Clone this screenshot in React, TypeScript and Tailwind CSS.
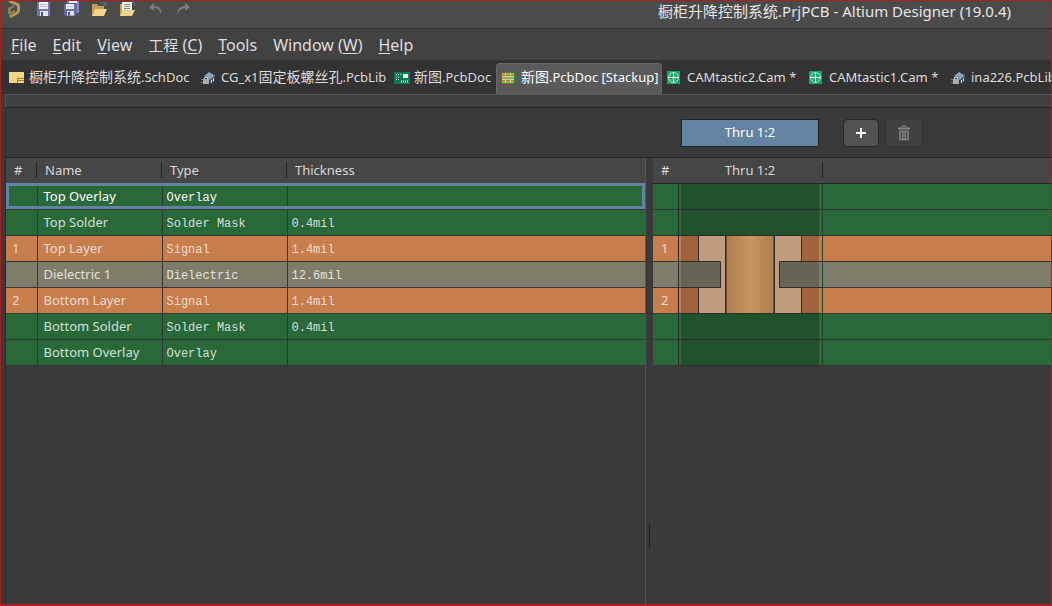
import type { ReactNode } from 'react'
import { clsx } from 'clsx'

type Material = 'mask' | 'copper' | 'core'

interface Layer {
  num?: string
  name: string
  type: string
  thickness?: string
  material: Material
}

const layers: Layer[] = [
  { name: 'Top Overlay', type: 'Overlay', material: 'mask' },
  { name: 'Top Solder', type: 'Solder Mask', thickness: '0.4mil', material: 'mask' },
  { num: '1', name: 'Top Layer', type: 'Signal', thickness: '1.4mil', material: 'copper' },
  { name: 'Dielectric 1', type: 'Dielectric', thickness: '12.6mil', material: 'core' },
  { num: '2', name: 'Bottom Layer', type: 'Signal', thickness: '1.4mil', material: 'copper' },
  { name: 'Bottom Solder', type: 'Solder Mask', thickness: '0.4mil', material: 'mask' },
  { name: 'Bottom Overlay', type: 'Overlay', material: 'mask' },
]

const rowColors: Record<Material, string> = {
  mask: 'bg-[#296839] text-[#d3e0d6]',
  copper: 'bg-[#c77d4c] text-[#f3dccd]',
  core: 'bg-[#7f7c6a] text-[#e3e2dc]',
}

const LogoIcon = () => (
  <svg width="14" height="18" viewBox="0 0 14 18" fill="none">
    <path d="M1 1l3-1 8 3.500 1 2v6L11 14l-7 4-2-2 8-5V6L3 3z" fill="#b3975c" />
    <path d="M1 8l6-3v2.500L4 9v3l4-2.200V12l-5 3-2-1.500z" fill="#94804f" />
  </svg>
)

const SaveIcon = () => (
  <svg width="15" height="15" viewBox="0 0 15 15">
    <path d="M1 0h13v14H2l-1-1z" fill="#7174b8" />
    <path d="M3 0h9v7H3z" fill="#f4f4fa" />
    <path d="M4 2.500h7M4 4.500h7" stroke="#b9bad6" />
    <path d="M4 9h8v5H4z" fill="#e6e6f2" />
    <path d="M5 10h2v4H5z" fill="#4a4d94" />
  </svg>
)

const SaveAllIcon = () => (
  <svg width="17" height="16" viewBox="0 0 17 16">
    <path d="M4 0h12v12H4z" fill="#8487c6" />
    <path d="M6 0h8v2H6z" fill="#f1f1f8" />
    <path d="M1 2.500h12V15H2l-1-1z" fill="#6a6db4" stroke="#3f4180" strokeWidth=".5" />
    <path d="M3 3h8v5H3z" fill="#f1f1f8" />
    <path d="M4 5.500h6" stroke="#b9bad6" />
    <path d="M4 10h7v4.500H4z" fill="#e2e2f0" />
    <path d="M5 11h2v3.500H5z" fill="#4a4d94" />
  </svg>
)

const OpenIcon = () => (
  <svg width="17" height="16" viewBox="0 0 17 16">
    <path d="M1 3h5l1 2h6v10H1z" fill="#c79d52" />
    <path d="M4 8h12l-3 7H1z" fill="#f3d48d" />
    <path d="M9 3c2-2 4-2 5 0m1-2v3h-3" fill="none" stroke="#5d7592" />
  </svg>
)

const OpenProjectIcon = () => (
  <svg width="17" height="16" viewBox="0 0 17 16">
    <path d="M1 3h4v12H1z" fill="#c79d52" />
    <path d="M3 1h10v10H3z" fill="#f5f2e8" />
    <path d="M5 3.500h6M5 5.500h6M5 7.500h6" stroke="#8a8a8a" />
    <path d="M4 9h12l-3 6H1z" fill="#f3d48d" />
    <path d="M13 0.500l3 2-1 2" fill="none" stroke="#5d7592" />
  </svg>
)

const UndoIcon = ({ flip = false }: { flip?: boolean }) => (
  <svg width="15" height="12" viewBox="0 0 15 12" className={clsx(flip && '-scale-x-100')}>
    <path d="M6 0L1 4l5 4V5.200c4 0 6 2 7 6.300 1.500-5-2-8.500-7-8.500z" fill="#7b7b7b" />
  </svg>
)

const SchIcon = () => (
  <svg width="16" height="12" viewBox="0 0 16 12">
    <path d="M0 0h15v11H0z" fill="#f3d583" />
    <path d="M8.500 11V6.500H15M8.500 8.500H15" fill="none" stroke="#a47b2c" />
  </svg>
)

const LibIcon = () => (
  <svg width="15" height="14" viewBox="0 0 15 14">
    <path d="M3 5l5-4 6 3.500L9 9z" fill="#7f9bb3" />
    <path d="M9 9l5-4.500v3L9 12z" fill="#46586a" />
    <path d="M10.500 9v3M12.500 7.500v3" stroke="#dde5ec" />
    <path d="M2 8h6v5H2z" fill="#a4acb4" />
    <path d="M3.500 8V6.500h3V8" fill="none" stroke="#c8d2dc" />
    <path d="M0 8.500h2M0 11.500h2" stroke="#6b7782" />
    <path d="M6 3.500l5 3M8 2.500l4 2.500" stroke="#b1c2d0" strokeDasharray="1 1" />
  </svg>
)

const PcbIcon = () => (
  <svg width="16" height="12" viewBox="0 0 16 12">
    <path d="M0 0h16v12H0z" fill="#0c7a55" />
    <path d="M2 2.500h5M2 5h4M2 7.500h4" stroke="#d8efe5" strokeDasharray="1 1" />
    <path d="M9 2h5v4H9z" fill="#e3f4ec" />
    <path d="M7 9.500h8" stroke="#e3f4ec" strokeWidth="2" strokeDasharray="1 1" />
  </svg>
)

const StackIcon = () => (
  <svg width="14" height="12" viewBox="0 0 14 12">
    <path d="M0 0h14v12H0z" fill="#1f9145" />
    <path d="M1 1h12v2.500H1zM1 8.500h12V11H1z" fill="#f08a3c" />
    <path d="M1 4h12v1.500H1zM1 6.500h12V8H1z" fill="#f3cf86" />
    <path d="M4.500 1v2.500M9.500 1v2.500M4.500 8v3M9.500 8v3" stroke="#f7d898" />
  </svg>
)

const CamIcon = () => (
  <svg width="13" height="13" viewBox="0 0 13 13">
    <path d="M0 0h13v13H0z" fill="#18a76b" />
    <circle cx="6.500" cy="6.500" r="5" fill="#25ad74" stroke="#a4e4c6" />
    <path d="M6.500 1v11M1 6.500h11" stroke="#eafff5" />
  </svg>
)

const TrashIcon = () => (
  <svg width="12" height="16" viewBox="0 0 12 16" fill="none" stroke="#858585">
    <path d="M4 2.500V1h4v1.500" />
    <path d="M0 3.500h12" strokeWidth="2" />
    <path d="M2 6v8.500h8V6M4.700 6v8M7.300 6v8" strokeWidth="1.500" />
    <path d="M1.500 6h9" />
  </svg>
)

interface DocTab {
  icon: ReactNode
  cjk?: string
  pre?: string
  post?: string
  width: string
  active?: boolean
}

const tabs: DocTab[] = [
  { icon: <SchIcon />, cjk: '橱柜升降控制系统', post: '.SchDoc', width: 'w-48' },
  { icon: <LibIcon />, pre: 'CG_x1', cjk: '固定板螺丝孔', post: '.PcbLib', width: 'w-[193px]' },
  { icon: <PcbIcon />, cjk: '新图', post: '.PcbDoc', width: 'w-[107px]' },
  { icon: <StackIcon />, cjk: '新图', post: '.PcbDoc [Stackup]', width: 'w-[166px]', active: true },
  { icon: <CamIcon />, pre: 'CAMtastic2.Cam *', width: 'w-[142px]' },
  { icon: <CamIcon />, pre: 'CAMtastic1.Cam *', width: 'w-[142px]' },
  { icon: <LibIcon />, pre: 'ina226.PcbLib', width: 'w-[142px]' },
]

const menus = [
  { key: 'F', after: 'ile' },
  { key: 'E', after: 'dit' },
  { key: 'V', after: 'iew' },
  { cjk: '工程', before: ' (', key: 'C', after: ')' },
  { key: 'T', after: 'ools' },
  { before: 'Window (', key: 'W', after: ')' },
  { key: 'H', after: 'elp' },
]

const tools = [
  { label: 'Save', icon: <SaveIcon /> },
  { label: 'Save all', icon: <SaveAllIcon /> },
  { label: 'Open', icon: <OpenIcon /> },
  { label: 'Open project', icon: <OpenProjectIcon /> },
  { label: 'Undo', icon: <UndoIcon /> },
  { label: 'Redo', icon: <UndoIcon flip /> },
]

function TitleBar() {
  return (
    <header className="flex h-7 items-start justify-between border-b border-[#303030] bg-[#4b4b4b] pl-1.5 pr-10">
      <div className="flex h-4 items-center">
        <LogoIcon />
        <div className="ml-2 flex">
          {tools.map((t) => (
            <button key={t.label} aria-label={t.label} className="flex h-4 w-7 items-center justify-center">
              {t.icon}
            </button>
          ))}
        </div>
      </div>
      <h1 className="text-[15px] leading-5 text-[#e6e6e6]">橱柜升降控制系统.PrjPCB - Altium Designer (19.0.4)</h1>
    </header>
  )
}

function MenuBar() {
  return (
    <nav className="flex h-[31px] items-center gap-4 bg-[#424242] pl-2.5 text-base text-[#dedede]">
      {menus.map((m) => (
        <button key={m.key} className="whitespace-nowrap">
          {m.cjk && <span className="text-[15px]">{m.cjk}</span>}
          {m.before}
          <span className="underline underline-offset-2">{m.key}</span>
          {m.after}
        </button>
      ))}
    </nav>
  )
}

function TabBar() {
  return (
    <div role="tablist" className="flex h-[34px] items-end overflow-hidden bg-[#333333] pl-[3px]">
      {tabs.map((t, i) => (
        <button
          key={i}
          role="tab"
          aria-selected={!!t.active}
          className={clsx(
            'flex h-[31px] shrink-0 items-center gap-1 whitespace-nowrap rounded-t-sm border px-1 pb-0.5 text-[13px]',
            t.width,
            t.active ? 'border-[#6a6a6a] border-b-[#5a5a5a] bg-[#5a5a5a] text-white' : 'border-transparent text-[#dcdcdc]'
          )}
        >
          <span className="flex w-4 shrink-0">{t.icon}</span>
          <span>
            {t.pre}
            <span className="text-sm">{t.cjk}</span>
            {t.post}
          </span>
        </button>
      ))}
    </div>
  )
}

function LayerTable() {
  return (
    <table className="w-full table-fixed border-collapse text-left">
      <colgroup>
        <col className="w-[31px]" />
        <col className="w-[125px]" />
        <col className="w-[125px]" />
        <col />
      </colgroup>
      <thead>
        <tr className="h-[25px] bg-[#464646] text-[13px] leading-4 text-[#d8d8d8]">
          {['#', 'Name', 'Type', 'Thickness'].map((h, i) => (
            <th key={h} className="border-b border-[#262626] p-0 font-normal">
              <div className={clsx('h-4 border-[#262626] pl-2', i < 3 && 'border-r')}>{h}</div>
            </th>
          ))}
        </tr>
      </thead>
      <tbody>
        {layers.map((l, i) => (
          <tr
            key={l.name}
            className={clsx(
              'h-[26px] border-b border-[#353535] text-[13px] leading-4',
              rowColors[l.material],
              i === 0 && 'text-white outline-3 -outline-offset-3 outline-[#6383a3]'
            )}
          >
            <td className="border-r border-[#353535] p-0 pl-1.5">{l.num}</td>
            <td className="border-r border-[#353535] p-0 pl-1.5">{l.name}</td>
            <td className="border-r border-[#353535] p-0 pl-1 pt-1 font-['Liberation_Mono',monospace] text-xs">{l.type}</td>
            <td className="p-0 pl-1 pt-1 font-['Liberation_Mono',monospace] text-xs">{l.thickness}</td>
          </tr>
        ))}
      </tbody>
    </table>
  )
}

// Cross section of the through via, drawn over the layer rows
function ViaDrawing() {
  return (
    <svg width="145" height="182" viewBox="0 0 145 182" className="absolute left-[25px] top-[26px]">
      <defs>
        <linearGradient id="barrel">
          <stop offset="0" stopColor="#ad7d4b" />
          <stop offset="0.5" stopColor="#c79563" />
          <stop offset="1" stopColor="#ad7d4b" />
        </linearGradient>
      </defs>
      <path d="M3 0h138v182H3z" fill="#000" fillOpacity=".2" />
      <path d="M144.500 0v182" stroke="#22432b" />
      <g stroke="#2b2b2b">
        <path d="M20.500 51.500h27v78h-27zM96.500 51.500h27v78h-27z" fill="#c09c7c" />
        <path d="M48 51.500h48v78H48z" fill="url(#barrel)" />
      </g>
      <path d="M3 78h40v25H3zM101 78h40v25h-40z" fill="#666452" />
      <path d="M0 77.500h42.500v26H0M145 77.500h-43.500v26H145" fill="none" stroke="#2b2b2b" />
    </svg>
  )
}

function ViaTable() {
  return (
    <div className="relative">
      <table className="w-full table-fixed border-collapse text-left text-[13px] leading-4">
        <colgroup>
          <col className="w-[25px]" />
          <col className="w-[145px]" />
          <col />
        </colgroup>
        <thead>
          <tr className="h-[25px] border-b border-[#262626] bg-[#464646] text-[#d8d8d8]">
            <th className="p-0 pl-2 font-normal">#</th>
            <th className="p-0 font-normal">
              <div className="h-4 border-r border-[#262626] text-center">Thru 1:2</div>
            </th>
            <th />
          </tr>
        </thead>
        <tbody>
          {layers.map((l) => (
            <tr key={l.name} className={clsx('h-[26px] border-b border-[#353535]', rowColors[l.material])}>
              <td className="border-r border-[#262626] p-0 pl-2">{l.num}</td>
              <td className="p-0" />
              <td className="p-0" />
            </tr>
          ))}
        </tbody>
      </table>
      <ViaDrawing />
    </div>
  )
}

export default function App() {
  return (
    <div className="flex h-screen flex-col overflow-hidden border border-b-2 border-[#a82020] bg-[#3a3a3a] font-['Noto_Sans','Noto_Sans_CJK_SC',sans-serif]">
      <TitleBar />
      <MenuBar />
      <TabBar />
      <div className="ml-1 h-3.5 border-b border-l border-t border-b-[#232323] border-l-[#555555] border-t-[#5a5a5a] bg-[#404040]" />
      <main className="ml-1 flex flex-1 flex-col border-l border-[#2a2a2a]">
        <div className="flex h-[50px] items-center border-b border-[#262626] pl-[675px]">
          <button className="h-7 w-[138px] border border-[#222222] bg-[#6383a3] text-[13px] text-white">Thru 1:2</button>
          <button
            aria-label="Add"
            className="ml-6 flex h-7 w-9 items-center justify-center rounded border border-[#282828] bg-[#525252]"
          >
            <svg width="10" height="10" viewBox="0 0 10 10">
              <path d="M5 0v10M0 5h10" stroke="#fff" strokeWidth="2" />
            </svg>
          </button>
          <button
            aria-label="Delete"
            disabled
            className="ml-1.5 flex h-7 w-[38px] items-center justify-center rounded border border-[#363636] bg-[#404040]"
          >
            <TrashIcon />
          </button>
        </div>
        <div className="flex flex-1">
          <section className="w-[640px] border-r border-[#555555]">
            <LayerTable />
          </section>
          <div className="flex w-[7px] items-end justify-center bg-[#3a3a3a] pb-14">
            <div className="h-6 w-px bg-[#1c1c1c]" />
          </div>
          <section className="min-w-0 flex-1">
            <ViaTable />
          </section>
        </div>
      </main>
    </div>
  )
}
